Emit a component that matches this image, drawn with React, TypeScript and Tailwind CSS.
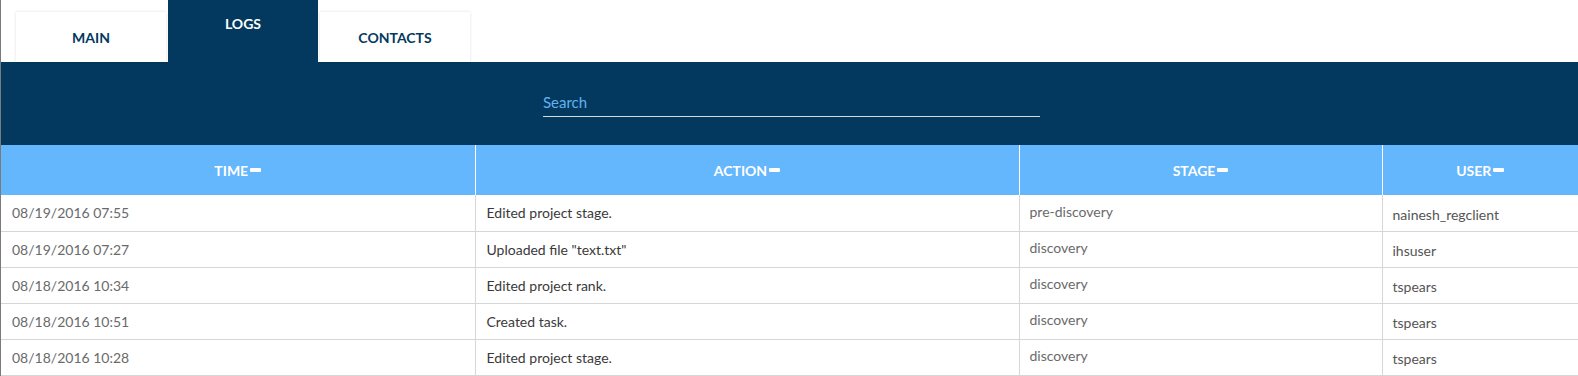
import { useState } from 'react';

type LogRow = {
  time: string;
  action: string;
  stage: string;
  user: string;
};

const rows: LogRow[] = [
  { time: '08/19/2016 07:55', action: 'Edited project stage.', stage: 'pre-discovery', user: 'nainesh_regclient' },
  { time: '08/19/2016 07:27', action: 'Uploaded file "text.txt"', stage: 'discovery', user: 'ihsuser' },
  { time: '08/18/2016 10:34', action: 'Edited project rank.', stage: 'discovery', user: 'tspears' },
  { time: '08/18/2016 10:51', action: 'Created task.', stage: 'discovery', user: 'tspears' },
  { time: '08/18/2016 10:28', action: 'Edited project stage.', stage: 'discovery', user: 'tspears' },
];

const tabs = ['MAIN', 'LOGS', 'CONTACTS'];

function SortBar() {
  return <span className="inline-block w-[11px] h-[4px] bg-white rounded-[1px] ml-[2px]" />;
}

export default function App() {
  const [active, setActive] = useState('LOGS');
  const [query, setQuery] = useState('');

  return (
    <div className="min-h-screen bg-white border-l border-[#7a7a7a] font-['Lato','Open_Sans',sans-serif]">
      {/* Tabs */}
      <div className="flex items-end h-[62px] pl-[15px]">
        {tabs.map((tab) =>
          tab === active ? (
            <button
              key={tab}
              onClick={() => setActive(tab)}
              className="w-[150px] h-[62px] bg-[#03395e] text-white text-[14px] font-bold flex justify-center pt-[13px] mx-[2px]"
            >
              {tab}
            </button>
          ) : (
            <button
              key={tab}
              onClick={() => setActive(tab)}
              className="w-[150px] h-[50px] bg-white text-[#03395e] text-[14px] font-bold flex items-center justify-center shadow-[0_0_3px_rgba(0,0,0,0.12)]"
            >
              {tab}
            </button>
          )
        )}
      </div>

      {/* Panel */}
      <div className="bg-[#03395e] pb-4">
        <div className="h-[83px] flex justify-center pt-[25px]">
          <input
            value={query}
            onChange={(e) => setQuery(e.target.value)}
            placeholder="Search"
            className="w-[497px] h-[30px] bg-transparent border-b border-[#d9d9d9] text-[15px] text-white placeholder:text-[#62b2f2] outline-none ml-[4px]"
          />
        </div>

        <table className="w-full table-fixed border-collapse bg-white text-[14px]">
          <colgroup>
            <col className="w-[474px]" />
            <col className="w-[544px]" />
            <col className="w-[363px]" />
            <col />
          </colgroup>
          <thead>
            <tr className="bg-[#64b6fd] h-[50px]">
              {['TIME', 'ACTION', 'STAGE', 'USER'].map((h, i) => (
                <th
                  key={h}
                  className={`text-white text-[14px] font-bold text-center ${i < 3 ? 'border-r border-white' : ''}`}
                >
                  <span className="inline-flex items-center">
                    {h}
                    <SortBar />
                  </span>
                </th>
              ))}
            </tr>
          </thead>
          <tbody>
            {rows.map((r, i) => (
              <tr key={i} className="h-[36px] border-b border-[#d6d6d6]">
                <td className="pl-[11px] text-[#6a6a6a] border-r border-[#d6d6d6]">{r.time}</td>
                <td className="pl-[11px] text-[#3a3a3a] border-r border-[#d6d6d6]">{r.action}</td>
                <td className="pl-[10px] text-[#6a6a6a] border-r border-[#d6d6d6] pb-[3px]">{r.stage}</td>
                <td className="pl-[10px] text-[#555] pt-[3px]">{r.user}</td>
              </tr>
            ))}
          </tbody>
        </table>
      </div>
    </div>
  );
}
